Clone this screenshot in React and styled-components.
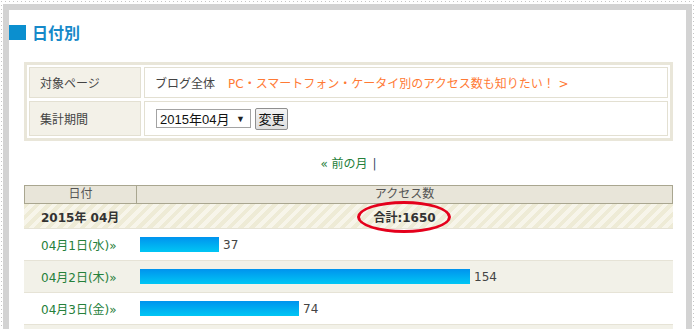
import React from "react";
import styled, { createGlobalStyle } from "styled-components";

const Global = createGlobalStyle`
  html, body { margin: 0; padding: 0; background: #fff; overflow: hidden; }
  body {
    font-family: "DejaVu Sans", "Noto Sans CJK JP", sans-serif;
    font-size: 12px;
    color: #444;
  }
  * { box-sizing: border-box; }
`;

const Frame = styled.div`
  width: 697px;
  height: 329px;
  padding: 4px 0 0 3px;
  background:
    linear-gradient(to right, #c6c6c6 1px, transparent 1px) 1px 1px / 4px 1px repeat-x,
    linear-gradient(to bottom, #c6c6c6 1px, transparent 1px) 1px 1px / 1px 4px repeat-y,
    linear-gradient(to bottom, #c6c6c6 1px, transparent 1px) 693px 1px / 1px 4px repeat-y;
`;

const Sheet = styled.div`
  width: 689px;
  height: 325px;
  border: 6px solid #d3d3d3;
  border-bottom: none;
  background: #fff;
  padding: 15px 13px 0 0;
  overflow: hidden;
`;

const Heading = styled.h2`
  display: flex;
  align-items: center;
  gap: 6px;
  height: 15px;
  margin: 0;
  font-size: 16px;
  font-weight: bold;
  line-height: 15px;
  color: #1689c9;
  font-family: "Noto Sans CJK JP", sans-serif;
`;

const Square = styled.span`
  width: 17px;
  height: 15px;
  background: #0b8fcf;
`;

const InfoBox = styled.div`
  margin: 22px 0 0 15px;
  border: 3px solid #e9e6d9;
  padding: 2px;
  display: grid;
  grid-template-columns: 112px 1fr;
  grid-template-rows: 31px 35px;
  gap: 3px;
`;

const Cell = styled.div`
  display: flex;
  align-items: center;
  border: 1px solid #e3e0d2;
  padding-left: 10px;
  background: ${(p) => (p.$label ? "#f3f1e8" : "#fff")};
  color: #444;
  gap: 4px;
`;

const OrangeLink = styled.a`
  margin-left: 9px;
  color: #ff7a35;
  text-decoration: none;
`;

const SelectBox = styled.div`
  display: flex;
  align-items: center;
  justify-content: space-between;
  width: 95px;
  height: 19px;
  margin-left: 1px;
  padding: 0 5px 0 3px;
  border: 1px solid #a3a3a3;
  background: #fff;
  color: #111;
  font-family: "Liberation Sans", "Noto Sans CJK JP", sans-serif;
  font-size: 13px;
`;

const Arrow = styled.span`
  font-size: 9px;
  color: #222;
`;

const Button = styled.button`
  width: 33px;
  height: 22px;
  padding: 0;
  border: 1px solid #8f8f8f;
  border-radius: 2px;
  background: linear-gradient(#f4f4f4, #dedede);
  font-family: "Noto Sans CJK JP", sans-serif;
  font-size: 13px;
  color: #111;
`;

const Pager = styled.div`
  margin: 14px 0 12px 15px;
  height: 18px;
  line-height: 18px;
  text-align: center;
  font-size: 12px;
`;

const GreenLink = styled.a`
  color: #25803a;
  text-decoration: none;
`;

const Sep = styled.span`
  color: #3a4a6a;
  margin-left: 5px;
`;

const Table = styled.div`
  margin-left: 15px;
`;

const HeadRow = styled.div`
  display: grid;
  grid-template-columns: 111px 1fr;
  height: 19px;
  border: 1px solid #a9a690;
  background: #e8e5d9;
  color: #555;
  line-height: 17px;
  text-align: center;
`;

const HeadCell = styled.div`
  border-left: ${(p) => (p.$divider ? "1px solid #a9a690" : "none")};
`;

const SumRow = styled.div`
  display: grid;
  grid-template-columns: 112px 1fr;
  align-items: center;
  height: 24px;
  background: repeating-linear-gradient(
    -45deg,
    #eeebd6 0px,
    #eeebd6 4px,
    #f7f5ea 4px,
    #f7f5ea 8px
  );
  font-weight: bold;
  color: #333;
`;

const SumDate = styled.div`
  padding-left: 17px;
`;

const SumTotal = styled.div`
  position: relative;
  text-align: center;
`;

const Ellipse = styled.span`
  position: absolute;
  left: 50%;
  top: 50%;
  width: 94px;
  height: 32px;
  margin-left: -1px;
  margin-top: 1px;
  transform: translate(-50%, -50%);
  border: 3px solid #e4001c;
  border-radius: 50%;
`;

const DataRow = styled.div`
  display: grid;
  grid-template-columns: 112px 1fr;
  align-items: center;
  height: 32px;
  border-top: 1px solid #e6e3d6;
  background: ${(p) => (p.$alt ? "#f2f1e8" : "#fff")};
`;

const DateLink = styled.a`
  padding-left: 17px;
  color: #25803a;
  text-decoration: none;
`;

const BarCell = styled.div`
  display: flex;
  align-items: center;
  gap: 4px;
  padding-left: 4px;
  color: #444;
`;

const Bar = styled.span`
  display: block;
  height: 15px;
  background: linear-gradient(#0093ee, #00c6f4);
`;

const rows = [
  { date: "04月1日(水)»", n: 37 },
  { date: "04月2日(木)»", n: 154 },
  { date: "04月3日(金)»", n: 74 },
];

export default function App() {
  return (
    <>
      <Global />
      <Frame>
        <Sheet>
          <Heading>
            <Square />
            日付別
          </Heading>
          <InfoBox>
            <Cell $label>対象ページ</Cell>
            <Cell>
              ブログ全体
              <OrangeLink href="#">PC・スマートフォン・ケータイ別のアクセス数も知りたい！ &gt;</OrangeLink>
            </Cell>
            <Cell $label>集計期間</Cell>
            <Cell>
              <SelectBox>
                <span>2015年04月</span>
                <Arrow>▼</Arrow>
              </SelectBox>
              <Button>変更</Button>
            </Cell>
          </InfoBox>
          <Pager>
            <GreenLink href="#">« 前の月</GreenLink>
            <Sep>|</Sep>
          </Pager>
          <Table>
            <HeadRow>
              <HeadCell>日付</HeadCell>
              <HeadCell $divider>アクセス数</HeadCell>
            </HeadRow>
            <SumRow>
              <SumDate>2015年 04月</SumDate>
              <SumTotal>
                合計:1650
                <Ellipse />
              </SumTotal>
            </SumRow>
            {rows.map((r, i) => (
              <DataRow key={r.date} $alt={i % 2 === 1}>
                <DateLink href="#">{r.date}</DateLink>
                <BarCell>
                  <Bar style={{ width: `${Math.round((r.n * 330) / 154)}px` }} />
                  {r.n}
                </BarCell>
              </DataRow>
            ))}
            <DataRow $alt />
          </Table>
        </Sheet>
      </Frame>
    </>
  );
}
